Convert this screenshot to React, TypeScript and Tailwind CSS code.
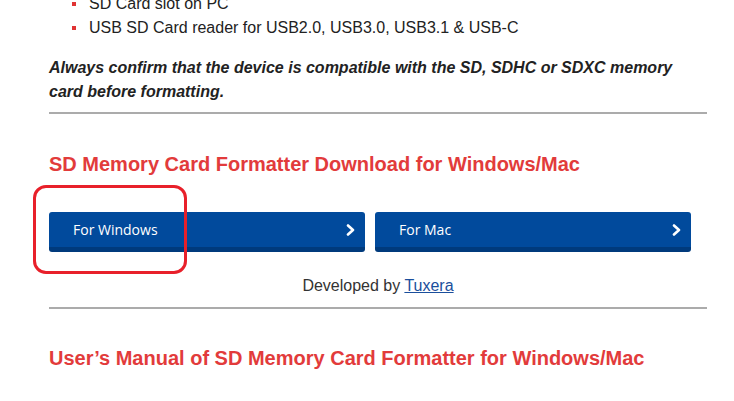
import React from "react";

function Chevron() {
  return (
    <svg width="9" height="12" viewBox="0 0 9 12" className="shrink-0">
      <polyline
        points="2,1.5 7,6 2,10.5"
        fill="none"
        stroke="white"
        strokeWidth="2.6"
        strokeLinecap="round"
        strokeLinejoin="round"
      />
    </svg>
  );
}

function DownloadButton({ label }: { label: string }) {
  return (
    <a
      href="#"
      className="flex h-[40px] w-[316px] items-center justify-between rounded-[3px] border-b-[5px] border-[#003a7c] bg-[#014a9c] pl-[24px] pr-[10px] text-[14px] text-white"
      style={{ fontFamily: '"Open Sans", "Liberation Sans", sans-serif' }}
    >
      <span>{label}</span>
      <Chevron />
    </a>
  );
}

export default function App() {
  const bullets = [
    "SD Card slot on PC",
    "USB SD Card reader for USB2.0, USB3.0, USB3.1 & USB-C",
  ];

  return (
    <div
      className="h-[401px] overflow-hidden bg-white"
      style={{ fontFamily: '"Liberation Sans", Arial, sans-serif' }}
    >
      <div className="ml-[49px] w-[658px]">
        {/* Compatible readers */}
        <ul className="mt-[-8px] pl-[23px] text-[16px] leading-[24px] text-[#222]">
          {bullets.map((b) => (
            <li key={b} className="flex items-center">
              <span className="mr-[13px] h-[4px] w-[4px] bg-[#e03333]" />
              {b}
            </li>
          ))}
        </ul>

        <p className="mt-[16px] text-[16px] font-bold italic leading-[24px] text-[#222]">
          Always confirm that the device is compatible with the SD, SDHC or SDXC memory
          <br />
          card before formatting.
        </p>

        <div className="mt-[8px] h-[2px] bg-[#ababab]" />

        {/* Download */}
        <h2 className="mt-[36px] text-[20px] font-bold leading-[28px] text-[#e23b3b]">
          SD Memory Card Formatter Download for Windows/Mac
        </h2>

        <div className="relative mt-[34px] flex gap-[10px]">
          <DownloadButton label="For Windows" />
          <DownloadButton label="For Mac" />
          <div className="pointer-events-none absolute left-[-16px] top-[-27px] h-[89px] w-[154px] rounded-[13px] border-[3px] border-[#e8202a]" />
        </div>

        <p className="mt-[22px] text-center text-[16px] leading-[24px] text-[#333]">
          Developed by{" "}
          <a href="#" className="text-[#1b4f9c] underline">
            Tuxera
          </a>
        </p>

        <div className="mt-[9px] h-[2px] bg-[#ababab]" />

        {/* Manual */}
        <h2 className="mt-[35px] text-[20px] font-bold leading-[28px] text-[#e23b3b]">
          User’s Manual of SD Memory Card Formatter for Windows/Mac
        </h2>
      </div>
    </div>
  );
}
